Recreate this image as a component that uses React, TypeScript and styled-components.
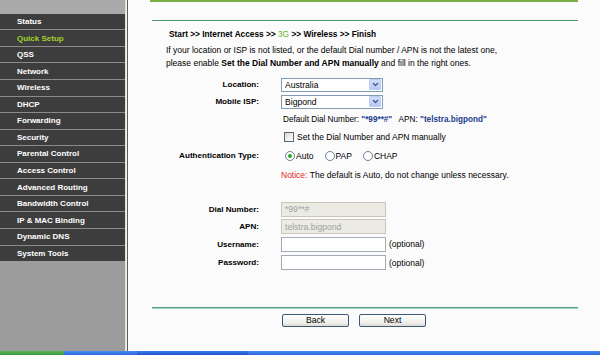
import React from 'react';
import styled, { createGlobalStyle } from 'styled-components';

const GlobalStyle = createGlobalStyle`
  html, body {
    margin: 0;
    padding: 0;
    background: #fbfbfb;
    font-family: "Liberation Sans", Arial, sans-serif;
    font-size: 8.5px;
    color: #000;
  }
  * { box-sizing: border-box; }
`;

const Page = styled.div`
  width: 600px;
  height: 355px;
  display: grid;
  grid-template-columns: 125px 4px 1fr;
  grid-template-rows: 351px 4px;
  overflow: hidden;
`;

const Sidebar = styled.nav`
  background: #9c9c9c;
  display: flex;
  flex-direction: column;
`;

const SideHead = styled.div`
  height: 13.7px;
  background: #a9a9a9;
`;

const NavItem = styled.div<{ $active?: boolean }>`
  height: 16.57px;
  background: #3d3d3d;
  border-bottom: 1px solid #8a8a8a;
  padding-left: 17px;
  display: flex;
  align-items: center;
  font-size: 8px;
  font-weight: bold;
  color: ${({ $active }) => ($active ? '#a4d12c' : '#ffffff')};
  &:last-child {
    border-bottom: none;
    height: 15.57px;
  }
`;

const Divider = styled.div`
  background: linear-gradient(to right, #e4e0d4 0 1px, #f3f1ea 1px 2px, #5c5c5c 2px 3px, #fbfbfb 3px 4px);
`;

const Main = styled.main`
  padding-left: 21px;
  display: flex;
  flex-direction: column;
  width: 449px;
`;

const TopBar = styled.div`
  height: 2px;
  background: #78b043;
`;

const HeadLine = styled.div`
  margin-top: 18px;
  margin-left: 2px;
  height: 1px;
  background: #4f9b6c;
`;

const Crumbs = styled.div`
  margin-top: 7px;
  padding-left: 19px;
  height: 12px;
  line-height: 12px;
  font-size: 8.3px;
  font-weight: bold;
`;

const Green = styled.span`
  color: #6cb52d;
  font-weight: normal;
`;

const Intro = styled.p`
  margin: 4px 0 0;
  padding-left: 16px;
  line-height: 12.5px;
`;

const Form = styled.div`
  margin-top: 7px;
  display: flex;
  flex-direction: column;
`;

const Row = styled.div<{ $h: number }>`
  height: ${({ $h }) => $h}px;
  display: grid;
  grid-template-columns: 109px 1fr;
  column-gap: 22px;
  align-items: center;
`;

const Label = styled.div`
  text-align: right;
  font-weight: bold;
  font-size: 8.1px;
  white-space: nowrap;
`;

const Field = styled.div<{ $indent?: number; $size?: number }>`
  display: flex;
  align-items: center;
  white-space: nowrap;
  padding-left: ${({ $indent }) => $indent ?? 0}px;
  font-size: ${({ $size }) => ($size ? `${$size}px` : 'inherit')};
`;

const SelectBox = styled.div`
  width: 102px;
  height: 14px;
  border: 1px solid #7f9db9;
  background: #fff;
  display: flex;
  align-items: center;
  justify-content: space-between;
  padding: 0 1px 0 3px;
  font-size: 8.6px;
`;

const DropBtn = styled.span`
  width: 12px;
  height: 11px;
  border-radius: 1px;
  background: linear-gradient(#d2defc, #b6c9f7);
  border: 1px solid #bccbf0;
  display: flex;
  align-items: center;
  justify-content: center;
`;

const TextBox = styled.div<{ $disabled?: boolean }>`
  width: 105px;
  height: 15px;
  border: 1px solid ${({ $disabled }) => ($disabled ? '#c9c7ba' : '#a3abb7')};
  background: ${({ $disabled }) => ($disabled ? '#ebebe4' : '#ffffff')};
  color: #a2a2a2;
  padding-left: 3px;
  display: flex;
  align-items: center;
  font-size: 8.6px;
`;

const Hint = styled.span`
  margin-left: 3px;
`;

const Value = styled.span`
  color: #1b3b8e;
  font-weight: bold;
`;

const Check = styled.span`
  width: 10px;
  height: 10px;
  margin: 0 3px 0 3px;
  border: 1px solid #55657a;
  background: linear-gradient(135deg, #dcdcd6, #ffffff);
`;

const Radio = styled.span<{ $checked?: boolean }>`
  width: 10px;
  height: 10px;
  border-radius: 50%;
  border: 1px solid #6f8299;
  background: #fff;
  margin: 0 1px 0 4px;
  display: inline-flex;
  align-items: center;
  justify-content: center;
  &::after {
    content: '';
    display: ${({ $checked }) => ($checked ? 'block' : 'none')};
    width: 4px;
    height: 4px;
    border-radius: 50%;
    background: #2aa22a;
  }
`;

const RadioLabel = styled.span`
  margin-right: 7px;
`;

const Red = styled.span`
  color: #e3241b;
`;

const FootLine = styled.div`
  margin-top: 35px;
  margin-left: 2px;
  height: 2px;
  background: linear-gradient(#5b9a85 0 1px, #9cd8c0 1px 2px);
`;

const Buttons = styled.div`
  margin-top: 5px;
  padding-left: 132px;
  display: flex;
  gap: 10px;
`;

const Button = styled.button`
  width: 67px;
  height: 13px;
  padding: 0;
  border: 1px solid #3d5877;
  border-radius: 2px;
  background: linear-gradient(#ffffff, #f0efea 70%, #dcdad0);
  font-family: inherit;
  font-size: 8.6px;
  line-height: 11px;
  color: #000;
`;

const Taskbar = styled.div`
  grid-column: 1 / -1;
  display: flex;
  background: linear-gradient(#4a8cf2, #2c66dd);
`;

const StartButton = styled.div`
  width: 64px;
  background: linear-gradient(#5cb85c, #3a9a3a);
`;

const TaskSlot = styled.div<{ $w: number; $dark?: boolean }>`
  width: ${({ $w }) => $w}px;
  background: ${({ $dark }) => ($dark ? 'linear-gradient(#3c7ae8, #1f55cf)' : 'transparent')};
`;

const Chevron = () => (
  <svg width="7" height="5" viewBox="0 0 7 5">
    <path d="M1 1 L3.5 3.5 L6 1" fill="none" stroke="#4b5f86" strokeWidth="1.4" />
  </svg>
);

const navItems = [
  'Status',
  'Quick Setup',
  'QSS',
  'Network',
  'Wireless',
  'DHCP',
  'Forwarding',
  'Security',
  'Parental Control',
  'Access Control',
  'Advanced Routing',
  'Bandwidth Control',
  'IP & MAC Binding',
  'Dynamic DNS',
  'System Tools',
];

export default function App() {
  return (
    <>
      <GlobalStyle />
      <Page>
        <Sidebar>
          <SideHead />
          {navItems.map((item) => (
            <NavItem key={item} $active={item === 'Quick Setup'}>
              {item}
            </NavItem>
          ))}
        </Sidebar>
        <Divider />
        <Main>
          <TopBar />
          <HeadLine />
          <Crumbs>
            Start &gt;&gt; Internet Access &gt;&gt; <Green>3G</Green> &gt;&gt; Wireless &gt;&gt; Finish
          </Crumbs>
          <Intro>
            If your location or ISP is not listed, or the default Dial number / APN is not the latest one,
            <br />
            please enable <b>Set the Dial Number and APN manually</b> and fill in the right ones.
          </Intro>
          <Form>
            <Row $h={17}>
              <Label>Location:</Label>
              <Field>
                <SelectBox>
                  Australia
                  <DropBtn>
                    <Chevron />
                  </DropBtn>
                </SelectBox>
              </Field>
            </Row>
            <Row $h={17}>
              <Label>Mobile ISP:</Label>
              <Field>
                <SelectBox>
                  Bigpond
                  <DropBtn>
                    <Chevron />
                  </DropBtn>
                </SelectBox>
              </Field>
            </Row>
            <Row $h={18}>
              <Label />
              <Field $indent={2} $size={8.2}>
                Default Dial Number:&nbsp;<Value>"*99**#"</Value>&nbsp;&nbsp; APN:&nbsp;<Value>"telstra.bigpond"</Value>
              </Field>
            </Row>
            <Row $h={17}>
              <Label />
              <Field>
                <Check />
                Set the Dial Number and APN manually
              </Field>
            </Row>
            <Row $h={21}>
              <Label>Authentication Type:</Label>
              <Field>
                <Radio $checked />
                <RadioLabel>Auto</RadioLabel>
                <Radio />
                <RadioLabel>PAP</RadioLabel>
                <Radio />
                <RadioLabel>CHAP</RadioLabel>
              </Field>
            </Row>
            <Row $h={17}>
              <Label />
              <Field>
                <Red>Notice:</Red>&nbsp;The default is Auto, do not change unless necessary.
              </Field>
            </Row>
            <Row $h={17} />
            <Row $h={18}>
              <Label>Dial Number:</Label>
              <Field>
                <TextBox $disabled>*99**#</TextBox>
              </Field>
            </Row>
            <Row $h={17}>
              <Label>APN:</Label>
              <Field>
                <TextBox $disabled>telstra.bigpond</TextBox>
              </Field>
            </Row>
            <Row $h={18}>
              <Label>Username:</Label>
              <Field>
                <TextBox />
                <Hint>(optional)</Hint>
              </Field>
            </Row>
            <Row $h={19}>
              <Label>Password:</Label>
              <Field>
                <TextBox />
                <Hint>(optional)</Hint>
              </Field>
            </Row>
          </Form>
          <FootLine />
          <Buttons>
            <Button>Back</Button>
            <Button>Next</Button>
          </Buttons>
        </Main>
        <Taskbar>
          <StartButton />
          <TaskSlot $w={73} />
          <TaskSlot $w={111} $dark />
        </Taskbar>
      </Page>
    </>
  );
}
